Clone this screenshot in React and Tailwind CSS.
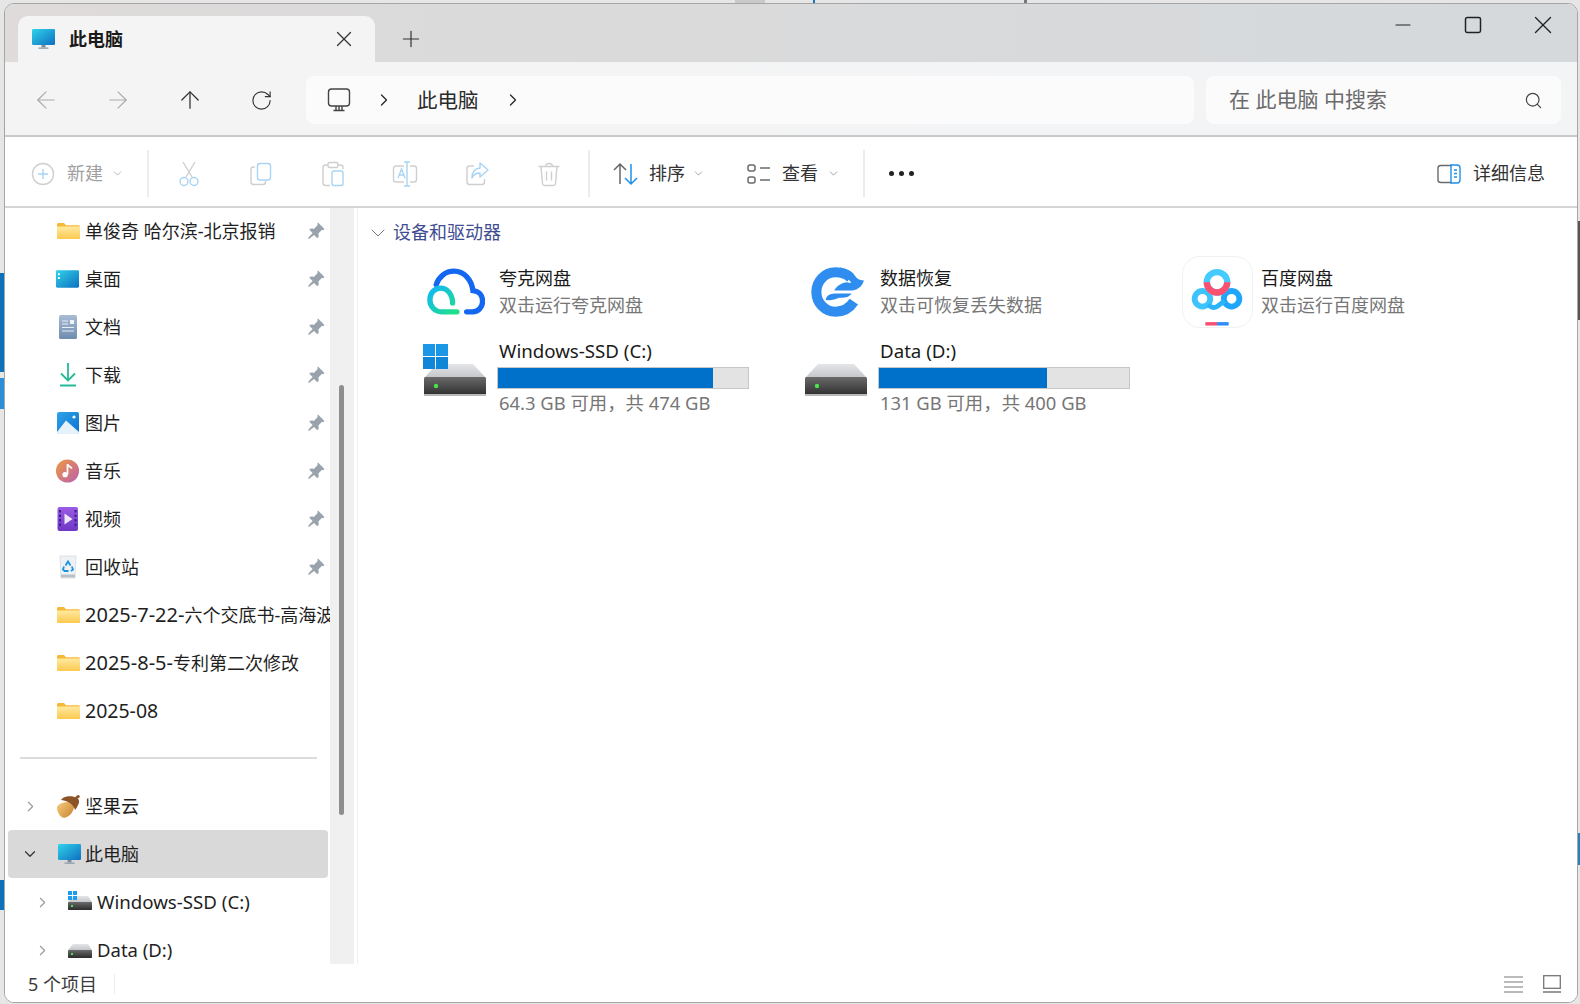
import React from "react";
import { ArrowLeft, ArrowRight, ArrowUp, ChevronDown, ChevronRight, Minus, Plus, RotateCw, Search, Square, X } from "lucide-react";

const Gradients = () => (
  <svg width="0" height="0" className="absolute">
    <defs>
      <linearGradient id="screen" x1="0" y1="0" x2="1" y2="1">
        <stop offset="0" stopColor="#2fd3ea" />
        <stop offset="1" stopColor="#0f6fc0" />
      </linearGradient>
      <linearGradient id="folder" x1="0" y1="0" x2="0" y2="1">
        <stop offset="0" stopColor="#ffe9a0" />
        <stop offset="1" stopColor="#fcc94f" />
      </linearGradient>
      <linearGradient id="doc" x1="0" y1="0" x2="0" y2="1">
        <stop offset="0" stopColor="#a9bcd4" />
        <stop offset="1" stopColor="#6f8cb0" />
      </linearGradient>
      <linearGradient id="pic" x1="0" y1="0" x2="1" y2="1">
        <stop offset="0" stopColor="#2fa3ea" />
        <stop offset="1" stopColor="#0b72cf" />
      </linearGradient>
      <linearGradient id="music" x1="0" y1="0" x2="1" y2="1">
        <stop offset="0" stopColor="#f09a3e" />
        <stop offset="1" stopColor="#b95fb0" />
      </linearGradient>
      <linearGradient id="video" x1="0" y1="0" x2="0" y2="1">
        <stop offset="0" stopColor="#9a5ce6" />
        <stop offset="1" stopColor="#6d37c4" />
      </linearGradient>
      <linearGradient id="nut" x1="0" y1="0" x2="1" y2="1">
        <stop offset="0" stopColor="#f5cb7c" />
        <stop offset="1" stopColor="#c77f2c" />
      </linearGradient>
      <linearGradient id="hddtop" x1="0" y1="0" x2="0" y2="1">
        <stop offset="0" stopColor="#e4e5e7" />
        <stop offset="1" stopColor="#c3c6ca" />
      </linearGradient>
      <linearGradient id="hddfront" x1="0" y1="0" x2="0" y2="1">
        <stop offset="0" stopColor="#6a6a6a" />
        <stop offset="1" stopColor="#2c2c2c" />
      </linearGradient>
      <linearGradient id="quark" x1="0" y1="0" x2="1" y2="1">
        <stop offset="0" stopColor="#10b8f5" />
        <stop offset="1" stopColor="#20e089" />
      </linearGradient>
    </defs>
  </svg>
);

const FolderIcon = () => (
  <svg width="24" height="24" viewBox="0 0 24 24">
    <path d="M1 5.500C1 4.700 1.600 4 2.500 4H8l2 2.200h12.500c.8 0 1.500.7 1.500 1.500V8H1z" fill="#f5b93a" />
    <path d="M1 7.500h23V19c0 .6-.5 1-1 1H2c-.6 0-1-.4-1-1z" fill="url(#folder)" />
  </svg>
);
const DesktopIcon = () => (
  <svg width="26" height="24" viewBox="0 0 26 24" className="-ml-px">
    <rect x="1" y="3" width="24" height="18" rx="1.500" fill="url(#screen)" />
    <rect x="3" y="6" width="2" height="2" fill="#fff" />
    <rect x="3" y="10" width="2" height="2" fill="#fff" />
  </svg>
);
const DocIcon = () => (
  <svg width="24" height="24" viewBox="0 0 24 24">
    <rect x="3" y="0" width="18" height="24" rx="1.500" fill="url(#doc)" />
    <path d="M6 6h6M6 9h6M6 12.500h12M6 16h12" stroke="#e8eef5" strokeWidth="1.200" />
    <rect x="14" y="5" width="4" height="4" fill="#eef3f8" />
  </svg>
);
const DownloadIcon = () => (
  <svg width="24" height="24" viewBox="0 0 24 24" fill="none" stroke="#25b996" strokeWidth="1.800">
    <path d="M12 0v17M5 10.500l7 7 7-7M4 22.500h16" />
  </svg>
);
const PicIcon = () => (
  <svg width="24" height="24" viewBox="0 0 24 24">
    <rect x="1" y="1" width="22" height="22" rx="2" fill="url(#pic)" />
    <path d="M1 21L10 9.500 23 21v.5c0 .8-.7 1.500-1.500 1.500h-19C1.700 23 1 22.300 1 21.500z" fill="#e6f2fb" />
    <circle cx="18" cy="6" r="1.600" fill="#fff" />
  </svg>
);
const MusicIcon = () => (
  <svg width="26" height="26" viewBox="0 0 26 26" className="-ml-px">
    <circle cx="13" cy="13" r="12" fill="url(#music)" />
    <path d="M13 6v10.500" stroke="#fff" strokeWidth="1.800" />
    <path d="M13 6c1 2.500 3.500 2.500 4.500 4.500" stroke="#fff" strokeWidth="1.800" fill="none" />
    <circle cx="10.500" cy="16.800" r="2.800" fill="#fff" />
  </svg>
);
const VideoIcon = () => (
  <svg width="24" height="24" viewBox="0 0 24 24">
    <rect x="1.500" y="0" width="20.500" height="24" rx="2" fill="url(#video)" />
    <path d="M8.500 6.500l8 5.500-8 5.500z" fill="#f0e6fb" />
    {[3, 7.500, 12, 16.500].map((y) => (
      <g key={y}>
        <rect x="3" y={y} width="2" height="2.500" fill="#3d2080" />
        <rect x="18.500" y={y} width="2" height="2.500" fill="#3d2080" />
      </g>
    ))}
  </svg>
);
const BinIcon = () => (
  <svg width="24" height="24" viewBox="0 0 24 24">
    <path d="M4 1h16l-1 22H5z" fill="#eef2f5" stroke="#d4dadf" strokeWidth="0.800" />
    <rect x="5" y="19.500" width="14" height="3" fill="#b9c1c8" />
    <g fill="none" stroke="#1b94e0" strokeWidth="1.800">
      <path d="M9.500 10.500L12 6.500l2.500 4" />
      <path d="M15.800 11.500l1.200 3-2 1.500" />
      <path d="M8 11.500l-1 3 1.500 1.500h4" />
    </g>
  </svg>
);
const NutIcon = () => (
  <svg width="26" height="24" viewBox="0 0 26 24" className="-ml-0.5">
    <path d="M2 13c0-3 3-5 9-5s9 1 9 2c0 7-6 13-12 13-4 0-6-5-6-10z" fill="url(#nut)" transform="rotate(-12 12 14)" />
    <path d="M6 6c2-4 11-5 16-2 2 1 3 4 1 7-1 2-2 4-3 5-1-5-6-9-14-10z" fill="#8b5326" />
    <path d="M20 4c1-2 2-3 4-3l1 2-3 2z" fill="#8b5326" />
  </svg>
);
const MonitorIcon = () => (
  <svg width="24" height="24" viewBox="0 0 24 24">
    <rect x="1" y="2" width="23" height="16" rx="1.200" fill="url(#screen)" />
    <rect x="10.500" y="18" width="4" height="2.500" fill="#7d8f9c" />
    <rect x="7.500" y="20.500" width="10" height="1.300" fill="#8d9da8" />
  </svg>
);
const MiniDrive = ({ win }) => (
  <svg width="24" height="22" viewBox="0 0 24 22">
    <path d="M5 5h15l4 6H0z" fill="url(#hddtop)" />
    <rect x="0" y="11" width="24" height="8" rx="0.800" fill="url(#hddfront)" />
    <rect x="3" y="14" width="2" height="2" fill="#4be04b" />
    {win && (
      <g fill="#1d9bec">
        <rect x="0" y="0" width="4" height="4" />
        <rect x="5" y="0" width="4" height="4" />
        <rect x="0" y="5" width="4" height="4" />
        <rect x="5" y="5" width="4" height="4" />
      </g>
    )}
  </svg>
);
const Pin = () => (
  <svg width="20" height="20" viewBox="0 0 20 20" fill="#9aa3ad">
    <path d="M12 1.500l6.500 6.500-1.200 1.200-1.300-.4-3.600 3.600.3 3.400-1.400 1.400-3.300-3.300L3 18l-1-1 4.600-4.900-3.300-3.300 1.400-1.400 3.400.3 3.600-3.600-.4-1.300z" />
  </svg>
);

const HardDisk = ({ win }) => (
  <svg width="66" height="54" viewBox="0 0 66 54" className="block">
    <path d="M14 20h36l13 14H1z" fill="url(#hddtop)" />
    <rect x="1" y="33" width="62" height="19" rx="1.500" fill="url(#hddfront)" />
    <rect x="1" y="50" width="62" height="2" fill="#b9b9b9" />
    <circle cx="13" cy="42" r="2.200" fill="#49e34b" />
    {win && (
      <g fill="#1b97e8">
        <rect x="0" y="0" width="12" height="12" />
        <rect x="13" y="0" width="12" height="12" />
        <rect x="0" y="13" width="12" height="12" fill="#0f86d8" />
        <rect x="13" y="13" width="12" height="12" fill="#0f86d8" />
      </g>
    )}
  </svg>
);
const QuarkLogo = () => (
  <svg width="58" height="47" viewBox="0 0 60 48" fill="none" strokeWidth="5.500" strokeLinecap="round">
    <path d="M41 45h6c6.500 0 10.500-5 10.500-11 0-6-4-10.500-10-11C46 11 38 3 28 3 19 3 12 9 9.500 17" stroke="#1467f0" />
    <path d="M26.500 36C26.500 27 21 20.500 14 20.500 7.500 20.500 3 26 3 32.500 3 39.500 8 45 15 45h16" stroke="url(#quark)" />
  </svg>
);
const RecoverLogo = () => (
  <svg width="54" height="50" viewBox="0 0 56 52" fill="#2f8df0" className="ml-[3px]">
    <path d="M41 11C37.500 8 32 5.500 25.500 5.500 14.500 5.500 5.500 14.500 5.500 26S14.500 46.500 25.500 46.500c8 0 15-4.500 19-10.500" fill="none" stroke="#2f8df0" strokeWidth="10.500" />
    <path d="M30 .5C38 1.500 44 6 47 11c2.500 2.500 5 3 8 3-2 7-8 10.500-14 10.500H24c3-5 9-9 14-8.500 2 .2 3 .5 4 .5-3-4-6-7-12-8z" />
    <path d="M15 34c2-6 6-6.500 12-6.500h15c-2 3.500-6 4.500-11 4.500s-8 4-16 2z" />
  </svg>
);
const BaiduLogo = () => (
  <div className="flex h-[72px] w-[71px] items-center justify-center rounded-[18px] border border-[#f1f1f1] bg-white">
    <svg width="71" height="72" viewBox="0 0 71 72" fill="none">
      <g transform="translate(0 2)">
        <circle cx="20" cy="41" r="8" stroke="#3cc4fb" strokeWidth="6" />
        <circle cx="50" cy="41" r="8" stroke="#1ea6fb" strokeWidth="6" />
        <path d="M26 47c3 3 6 4 9 2l8-6" stroke="#2bb4fb" strokeWidth="5" />
        <circle cx="35" cy="24" r="10.500" stroke="#45cbff" strokeWidth="6.500" />
        <path d="M24.500 24a10.500 10.500 0 0 0 21 0" stroke="#fb5070" strokeWidth="6.500" />
      </g>
      <rect x="23" y="67" width="12" height="3.500" fill="#fb4d6f" />
      <rect x="35" y="67" width="12" height="3.500" fill="#2c8dfb" />
    </svg>
  </div>
);

// toolbar icons, grey frame with pale blue accent, the way disabled ones look
const grey = "#cfcfcf";
const pale = "#a9d4f3";
const CutIcon = () => (
  <svg width="26" height="26" viewBox="0 0 26 26" fill="none" strokeWidth="1.400">
    <path d="M7 1l9 15M19 1l-9 15" stroke={grey} />
    <circle cx="8" cy="20.500" r="4" stroke={pale} />
    <circle cx="18" cy="20.500" r="4" stroke={pale} />
  </svg>
);
const CopyIcon = () => (
  <svg width="26" height="26" viewBox="0 0 26 26" fill="none" strokeWidth="1.400">
    <path d="M7 6H5.500C4 6 3 7 3 8.500V21c0 1.500 1 2.500 2.500 2.500H15c1.500 0 2.500-1 2.500-2.500v-1" stroke={grey} />
    <rect x="9.500" y="2.500" width="13" height="16.500" rx="2.500" stroke={pale} />
  </svg>
);
const PasteIcon = () => (
  <svg width="26" height="26" viewBox="0 0 26 26" fill="none" strokeWidth="1.400">
    <path d="M8 4H5.500C4 4 3 5 3 6.500V22c0 1.500 1 2.500 2.500 2.500H10M18 4h2.500C22 4 23 5 23 6.500V8" stroke={grey} />
    <rect x="8" y="1.500" width="10" height="5" rx="1.500" stroke={grey} />
    <rect x="12" y="10" width="11" height="14.500" rx="2" stroke={pale} />
  </svg>
);
const RenameIcon = () => (
  <svg width="26" height="26" viewBox="0 0 26 26" fill="none" strokeWidth="1.400">
    <path d="M12 5H4C2.500 5 1.500 6 1.500 7.500v11C1.500 20 2.500 21 4 21h8M18 5h4c1.500 0 2.500 1 2.500 2.500v11c0 1.500-1 2.500-2.500 2.500h-4" stroke={grey} />
    <path d="M15 1v24M12 1h6M12 25h6M6 17l3.500-9 3.500 9M7.200 14h4.600" stroke={pale} />
  </svg>
);
const ShareIcon = () => (
  <svg width="26" height="26" viewBox="0 0 26 26" fill="none" strokeWidth="1.400">
    <path d="M10 5H5.500C4 5 3 6 3 7.500V21c0 1.500 1 2.500 2.500 2.500H18c1.500 0 2.500-1 2.500-2.500v-3" stroke={grey} />
    <path d="M16 2l8 7-8 7v-4c-3.500 0-6 1-8 5 0-6 3-9.500 8-10z" stroke={pale} strokeLinejoin="round" />
  </svg>
);
const TrashIcon = () => (
  <svg width="26" height="26" viewBox="0 0 26 26" fill="none" stroke={grey} strokeWidth="1.400">
    <path d="M2.500 5.500h21M9.500 5.500c0-4 7-4 7 0M5 5.500l1.500 17c.1 1 1 2 2 2h9c1 0 1.900-1 2-2l1.500-17M10.500 10.500v9M15.500 10.500v9" />
  </svg>
);
const SortIcon = () => (
  <svg width="26" height="24" viewBox="0 0 26 24" fill="none" strokeWidth="1.500">
    <path d="M7 22V2M1 8l6-6 6 6" stroke="#666" />
    <path d="M18 2v20M12 16l6 6 6-6" stroke="#1e90e8" />
  </svg>
);
const ViewIcon = () => (
  <svg width="24" height="22" viewBox="0 0 24 22" fill="none" stroke="#6b6b6b" strokeWidth="1.500">
    <rect x="1" y="2" width="7" height="6" rx="2" />
    <rect x="1" y="14" width="7" height="6" rx="2" />
    <path d="M13 5h10M13 17h10" />
  </svg>
);
const DetailIcon = () => (
  <svg width="24" height="20" viewBox="0 0 24 20" fill="none" strokeWidth="1.400">
    <path d="M15 1.500H4C2.500 1.500 1 2.500 1 4v12c0 1.500 1.500 2.500 3 2.500h11" stroke="#6b6b6b" />
    <path d="M14 1H20c2 0 3 1 3 3v12c0 2-1 3-3 3h-6z" stroke="#1e90e8" />
    <path d="M17 6h3M17 9.500h3M17 13h3" stroke="#1e90e8" />
  </svg>
);

const pinned = [
  { name: "单俊奇 哈尔滨-北京报销", icon: <FolderIcon /> },
  { name: "桌面", icon: <DesktopIcon /> },
  { name: "文档", icon: <DocIcon /> },
  { name: "下载", icon: <DownloadIcon /> },
  { name: "图片", icon: <PicIcon /> },
  { name: "音乐", icon: <MusicIcon /> },
  { name: "视频", icon: <VideoIcon /> },
  { name: "回收站", icon: <BinIcon /> },
];

const QuickRow = ({ name, icon, pin }) => (
  <div className="flex h-12 w-[325px] items-center overflow-hidden pl-[51px]">
    <div className="flex w-6 shrink-0 items-center">{icon}</div>
    <span className="ml-[5px] whitespace-nowrap">{name}</span>
    {pin && (
      <div className="ml-auto mr-1 shrink-0">
        <Pin />
      </div>
    )}
  </div>
);

const Tile = ({ icon, title, sub }) => (
  <div className="flex h-[73px] items-center">
    <div className="flex w-[79px] shrink-0 items-center justify-center pr-[8px]">{icon}</div>
    <div className="leading-[27px]">
      <div className="text-[#1a1a1a]">{title}</div>
      <div className="text-[#767676]">{sub}</div>
    </div>
  </div>
);

const Drive = ({ icon, title, used, sub }) => (
  <div className="flex h-[76px] items-start">
    <div className="mt-[6px] flex w-[79px] shrink-0 items-center justify-center pr-[8px]">{icon}</div>
    <div className="-ml-[2px] mt-px w-[252px]">
      <div className="ml-[2px] h-[28px] text-[18.700px] leading-[24px] text-[#1a1a1a]">{title}</div>
      <div className="h-[22px] border border-[#c6c6c6] bg-[#e3e3e3]">
        <div className="h-full bg-[#0071cb]" style={{ width: `${used}%` }} />
      </div>
      <div className="ml-[2px] h-[27px] text-[18.400px] leading-[27px] text-[#767676]">{sub}</div>
    </div>
  </div>
);

export default function App() {
  return (
    <div
      className="relative h-[1004px] w-[1580px] overflow-hidden bg-[#e6e6e6] text-[18px] text-[#1f1f1f]"
      style={{ fontFamily: '"Noto Sans", "Noto Sans CJK SC", sans-serif' }}
    >
      <Gradients />
      {/* bits of other windows peeking out behind */}
      <div className="absolute left-0 top-[273px] h-[99px] w-[6px] bg-[#0d72b9]" />
      <div className="absolute left-0 top-[378px] h-[31px] w-[6px] bg-[#2a8fd6]" />
      <div className="absolute left-0 top-[880px] h-[30px] w-[6px] bg-[#0d72b9]" />
      <div className="absolute right-0 top-[221px] h-[99px] w-[3px] bg-[#555]" />
      <div className="absolute right-0 top-[833px] h-[32px] w-[3px] bg-[#2a7fc0]" />
      <div className="absolute left-[735px] top-0 h-[4px] w-[30px] bg-[#c9c9c9]" />
      <div className="absolute left-[813px] top-0 h-[4px] w-[2px] bg-[#1a6fb5]" />
      <div className="absolute left-[1024px] top-0 h-[4px] w-[3px] bg-[#777]" />

      <div className="relative ml-[4px] mt-[3px] flex h-[1000px] w-[1574px] flex-col overflow-hidden rounded-[10px] border border-[#a6a6a6] bg-white">
        {/* title bar */}
        <div className="flex h-[58px] shrink-0 bg-linear-to-r from-[#dedbda] to-[#d5d9dc]">
          <div className="ml-[13px] mt-3 flex h-[46px] w-[357px] items-center rounded-t-[10px] bg-[#f5f4f4] pl-[13px]">
            <MonitorIcon />
            <span className="ml-[14px] font-semibold text-[#1a1a1a]">此电脑</span>
            <X className="ml-auto mr-[18px]" size={26} strokeWidth={1.1} color="#333" />
          </div>
          <div className="ml-[23px] mt-[22px] h-[26px]">
            <Plus size={26} strokeWidth={1.1} color="#333" />
          </div>
          <div className="ml-auto flex h-[42px] text-[#222]">
            <div className="flex w-[70px] items-center justify-center">
              <Minus size={24} strokeWidth={1.1} />
            </div>
            <div className="flex w-[70px] items-center justify-center">
              <Square size={20} strokeWidth={1.8} />
            </div>
            <div className="flex w-[69px] items-center justify-center">
              <X size={30} strokeWidth={1.1} />
            </div>
          </div>
        </div>

        {/* nav bar */}
        <div className="flex h-[75px] shrink-0 items-start border-b-2 border-[#c9c9c9] bg-linear-to-r from-[#f5f4f4] to-[#f2f4f6] pl-[5px] pt-[14px]">
          <div className="flex h-12 w-[72px] items-center justify-center text-[#a9a9a9]">
            <ArrowLeft size={28} strokeWidth={1} />
          </div>
          <div className="flex h-12 w-[72px] items-center justify-center text-[#a9a9a9]">
            <ArrowRight size={28} strokeWidth={1} />
          </div>
          <div className="flex h-12 w-[71px] items-center justify-center text-[#333]">
            <ArrowUp size={28} strokeWidth={1.1} />
          </div>
          <div className="flex h-12 w-[72px] items-center justify-center text-[#333]">
            <RotateCw size={23} strokeWidth={1.2} />
          </div>
          <div className="ml-[9px] flex h-12 w-[888px] items-center rounded-lg bg-[#fbfbfb] pl-[21px] text-[20.500px] text-[#2a2a2a]">
            <svg width="24" height="24" viewBox="0 0 24 24" fill="none" stroke="#444" strokeWidth="1.400">
              <rect x="1.500" y="1" width="21" height="17" rx="3" />
              <path d="M12 18v4M6.500 22.500h11M9 18v4M15 18v4" />
            </svg>
            <ChevronRight className="ml-[23px]" size={20} strokeWidth={1.6} />
            <span className="ml-[23px]">此电脑</span>
            <ChevronRight className="ml-[24px]" size={20} strokeWidth={1.6} />
          </div>
          <div className="ml-3 flex h-12 w-[355px] items-center rounded-lg bg-[#fbfbfb] pl-[23px] text-[21px] text-[#6b6b6b]">
            在 此电脑 中搜索
            <Search className="ml-auto mr-[18px]" size={19} strokeWidth={1.5} color="#444" />
          </div>
        </div>

        {/* command bar */}
        <div className="flex h-[71px] shrink-0 items-center border-b-2 border-[#d4d4d4] bg-white pt-1">
          <div className="ml-[26px] flex w-[116px] items-center text-[#a0a0a0]">
            <svg width="24" height="24" viewBox="0 0 24 24" fill="none" strokeWidth="1.400">
              <circle cx="12" cy="12" r="10.500" stroke="#cfcfcf" />
              <path d="M12 7v10M7 12h10" stroke={pale} />
            </svg>
            <span className="ml-[12px]">新建</span>
            <ChevronDown className="ml-[8px]" size={13} strokeWidth={1.4} />
          </div>
          <div className="h-[47px] w-0.5 bg-[#ececec]" />
          <div className="ml-[4px] flex">
            {[<CutIcon />, <CopyIcon />, <PasteIcon />, <RenameIcon />, <ShareIcon />, <TrashIcon />].map((icon, i) => (
              <div key={i} className="flex w-[72px] items-center justify-center">
                {icon}
              </div>
            ))}
          </div>
          <div className="ml-[3px] h-[47px] w-0.5 bg-[#ececec]" />
          <div className="ml-[23px] flex items-center text-[#333]">
            <SortIcon />
            <span className="ml-[10px]">排序</span>
            <ChevronDown className="ml-[7px] text-[#888]" size={13} strokeWidth={1.4} />
          </div>
          <div className="ml-[42px] flex items-center text-[#333]">
            <ViewIcon />
            <span className="ml-[11px]">查看</span>
            <ChevronDown className="ml-[9px] text-[#888]" size={13} strokeWidth={1.4} />
          </div>
          <div className="ml-[23px] h-[47px] w-0.5 bg-[#ececec]" />
          <div className="ml-[24px] flex gap-[5px]">
            <div className="size-[5px] rounded-full bg-[#222]" />
            <div className="size-[5px] rounded-full bg-[#222]" />
            <div className="size-[5px] rounded-full bg-[#222]" />
          </div>
          <div className="ml-auto mr-[32px] flex items-center text-[#333]">
            <DetailIcon />
            <span className="ml-[12px]">详细信息</span>
          </div>
        </div>

        {/* main */}
        <div className="flex min-h-0 flex-1">
          <div className="-mt-px w-[325px] shrink-0 overflow-hidden">
            {pinned.map((row) => (
              <QuickRow key={row.name} name={row.name} icon={row.icon} pin />
            ))}
            <QuickRow
              name={
                <>
                  <span className="text-[20px]">2025-7-22-</span>六个交底书-高海波
                </>
              }
              icon={<FolderIcon />}
            />
            <QuickRow
              name={
                <>
                  <span className="text-[20px]">2025-8-5-</span>专利第二次修改
                </>
              }
              icon={<FolderIcon />}
            />
            <QuickRow name={<span className="text-[19.500px]">2025-08</span>} icon={<FolderIcon />} />
            <div className="ml-[15px] mt-[22px] h-0.5 w-[297px] bg-[#dcdcdc]" />
            <div className="mt-[23px] flex h-12 items-center pl-[13px]">
              <div className="flex w-6 justify-center text-[#999]">
                <ChevronRight size={17} strokeWidth={1.6} />
              </div>
              <div className="ml-[15px] w-6">
                <NutIcon />
              </div>
              <span className="ml-1">坚果云</span>
            </div>
            <div className="ml-[3px] flex h-12 w-[320px] items-center rounded bg-[#d9d9d9] pl-[10px]">
              <div className="flex w-6 justify-center text-[#333]">
                <ChevronDown size={18} strokeWidth={1.6} />
              </div>
              <div className="ml-[15px] w-6">
                <MonitorIcon />
              </div>
              <span className="ml-1">此电脑</span>
            </div>
            <div className="flex h-12 items-center pl-[25px]">
              <div className="flex w-6 justify-center text-[#999]">
                <ChevronRight size={17} strokeWidth={1.6} />
              </div>
              <div className="ml-[14px] w-6">
                <MiniDrive win />
              </div>
              <span className="ml-[5px] whitespace-nowrap text-[18.700px]">Windows-SSD (C:)</span>
            </div>
            <div className="flex h-12 items-center pl-[25px]">
              <div className="flex w-6 justify-center text-[#999]">
                <ChevronRight size={17} strokeWidth={1.6} />
              </div>
              <div className="ml-[14px] w-6">
                <MiniDrive />
              </div>
              <span className="ml-[5px] whitespace-nowrap text-[18.500px]">Data (D:)</span>
            </div>
          </div>

          {/* scroll track */}
          <div className="w-6 shrink-0 bg-[#f0f0f0] pl-[9px] pt-[177px]">
            <div className="h-[430px] w-[5px] rounded-full bg-[#8e8e8e]" />
          </div>
          <div className="ml-[3px] w-px shrink-0 bg-[#efefef]" />

          <div className="min-w-0 flex-1">
            <div className="flex h-[47px] items-center pl-2 pt-[2px] text-[#3f4d92]">
              <ChevronDown size={24} strokeWidth={1} color="#777" />
              <span className="ml-[3px]">设备和驱动器</span>
            </div>
            <div className="grid grid-cols-[381px_381px_1fr] pl-[62px]">
              <Tile icon={<QuarkLogo />} title="夸克网盘" sub="双击运行夸克网盘" />
              <Tile icon={<RecoverLogo />} title="数据恢复" sub="双击可恢复丢失数据" />
              <Tile icon={<BaiduLogo />} title="百度网盘" sub="双击运行百度网盘" />
              <div className="mt-[10px]">
                <Drive icon={<HardDisk win />} title="Windows-SSD (C:)" used={86} sub="64.3 GB 可用，共 474 GB" />
              </div>
              <div className="mt-[10px]">
                <Drive icon={<HardDisk />} title="Data (D:)" used={67} sub="131 GB 可用，共 400 GB" />
              </div>
            </div>
          </div>
        </div>

        {/* status bar */}
        <div className="flex h-[38px] shrink-0 items-center bg-white pl-[23px] pt-[2px] text-[#3a3a3a]">
          <span className="w-[86px]">5 个项目</span>
          <div className="h-5 w-px bg-[#eeeeee]" />
          <div className="ml-auto flex items-center gap-[20px] pr-[16px]">
            <svg width="19" height="17" viewBox="0 0 19 17" stroke="#777" strokeWidth="1.200">
              <path d="M0 1h19M0 6h19M0 11h19M0 16h19" />
            </svg>
            <svg width="18" height="18" viewBox="0 0 18 18" fill="none" stroke="#777" strokeWidth="1.300">
              <rect x="0.700" y="0.700" width="16.600" height="12.600" />
              <path d="M0 17h18" />
            </svg>
          </div>
        </div>
      </div>
    </div>
  );
}
